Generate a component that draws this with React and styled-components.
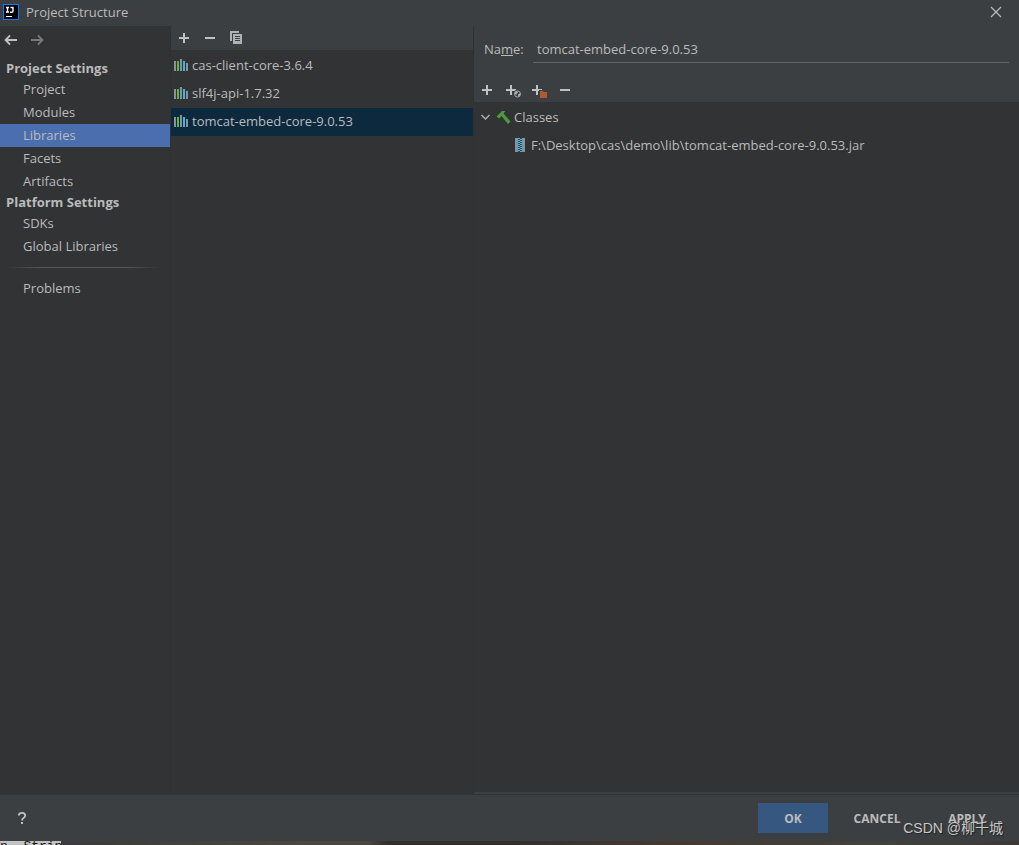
import React, { useState } from "react";
import styled, { createGlobalStyle } from "styled-components";

const GlobalStyle = createGlobalStyle`
  * {
    box-sizing: border-box;
  }

  body {
    margin: 0;
    background: #313335;
    color: #bbbbbb;
    font: 13px/18px "Open Sans", "Noto Sans CJK SC", sans-serif;
  }

  button, input {
    font: inherit;
    color: inherit;
  }
`;

const Window = styled.div`
  display: flex;
  flex-direction: column;
  height: 100vh;
  overflow: hidden;
`;

const TitleBar = styled.header`
  display: flex;
  align-items: center;
  gap: 7px;
  flex: none;
  height: 26px;
  padding: 0 15px 2px 3px;
  background: #3c3f41;
`;

const Title = styled.h1`
  flex: 1;
  margin: 0;
  font-size: 13px;
  font-weight: 400;
`;

const IconButton = styled.button`
  display: flex;
  align-items: center;
  justify-content: center;
  width: ${(props) => props.$width || 26}px;
  height: 24px;
  padding: 0;
  border: 0;
  background: none;
`;

const Body = styled.main`
  display: grid;
  grid-template-columns: 171px 303px 1fr;
  flex: 1;
  min-height: 0;
`;

const Sidebar = styled.nav`
  border-right: 1px solid #2f3133;
`;

const History = styled.div`
  display: flex;
  height: 33px;
  padding-top: 2px;
`;

const Heading = styled.h2`
  height: 19px;
  margin: 0;
  padding-left: 6px;
  font-size: 13px;
  font-weight: 700;
  line-height: 19px;
`;

const NavItem = styled.a`
  display: block;
  height: 23px;
  padding-left: 23px;
  line-height: 23px;
  color: inherit;
  text-decoration: none;
  background: ${(props) => (props.$active ? "#4b6eaf" : "transparent")};
`;

const Separator = styled.hr`
  height: 1px;
  margin: 9px 10px 9px 6px;
  border: 0;
  background: linear-gradient(to right, transparent, #555555 20%, #555555 80%, transparent);
`;

const ListPane = styled.section`
  border-right: 1px solid #2f3133;
`;

const Toolbar = styled.div`
  display: flex;
  height: 24px;
  background: #3c3f41;
`;

const List = styled.ul`
  margin: 0;
  padding: 2px 0;
  list-style: none;
`;

const ListItem = styled.li`
  display: flex;
  align-items: center;
  gap: 3px;
  height: 28px;
  padding: 0 2px 2px;
  background: ${(props) => (props.$active ? "#0d293e" : "transparent")};
`;

const Details = styled.section`
  display: flex;
  flex-direction: column;
  border-bottom: 1px solid #313335;
`;

const DetailsHeader = styled.div`
  padding-top: 11px;
  background: #3c3f41;
`;

const Field = styled.div`
  display: flex;
  align-items: center;
  gap: 10px;
  height: 26px;
  margin-bottom: 15px;
  padding: 0 10px;
`;

const Label = styled.label`
  width: 39px;
  padding-bottom: 2px;
`;

const Input = styled.input`
  flex: 1;
  min-width: 0;
  height: 26px;
  padding: 0 4px 2px;
  border: 0;
  border-bottom: 1px solid #646464;
  outline: none;
  background: transparent;
`;

const Tree = styled.ul`
  flex: 1;
  margin: 0;
  padding: 2px 0;
  border-bottom: 2px solid #3c3f41;
  list-style: none;
`;

const TreeRow = styled.li`
  display: flex;
  align-items: center;
  gap: ${(props) => (props.$level ? 3 : 2)}px;
  height: 28px;
  padding: 0 0 2px ${(props) => (props.$level ? 38 : 4)}px;
`;

const Footer = styled.footer`
  display: flex;
  align-items: center;
  gap: 8px;
  flex: none;
  height: 46px;
  padding: 0 11px 0 9px;
  background: #3c3f41;
`;

const Spacer = styled.div`
  flex: 1;
`;

const Button = styled.button`
  width: ${(props) => (props.$primary ? 70 : 82)}px;
  height: 30px;
  padding: 1px 0 0;
  border: 0;
  background: ${(props) => (props.$primary ? "#365880" : "transparent")};
  font-size: 12px;
  font-weight: 700;
`;

const Behind = styled.div`
  display: flex;
  flex: none;
  height: 4px;
  overflow: hidden;
  background: linear-gradient(to right, #3b3c3b 8%, #48483f 30%, #48483f 36%, #342f2f 38%, #322f2f 50%, #45392f 65%, #40423b 85%, #3c3a38);
`;

const BehindCode = styled.code`
  width: 61px;
  background: #c3c3c3;
  color: #161616;
  font: 13px/12px "Liberation Mono", monospace;
  white-space: pre;
`;

const Watermark = styled.div`
  position: absolute;
  right: 16px;
  bottom: 7px;
  color: #c8c8c8;
  font: 14px/20px "Liberation Sans", "Noto Sans CJK SC", sans-serif;
  text-shadow: 1px 1px 1px #222222;
  pointer-events: none;
`;

const Logo = () => (
  <svg width="16" height="16" viewBox="0 0 16 16" aria-hidden="true">
    <rect width="16" height="16" fill="#087cfa" />
    <rect x="1" y="1" width="14" height="14" fill="#000" />
    <path d="M3 3.500h3M4.500 3v5M3 8h3M7.500 3.500H10.500M10 3.500V7q0 1.300-1.300 1.300H7" fill="none" stroke="#fff" strokeWidth="1.400" />
    <path d="M3 12.500h6" stroke="#fff" strokeWidth="1" />
  </svg>
);

const CloseIcon = () => (
  <svg width="12" height="12" viewBox="0 0 12 12" aria-hidden="true">
    <path d="M1 1l10 10M11 1L1 11" stroke="#bbbbbb" strokeWidth="1.200" />
  </svg>
);

const ArrowIcon = ({ forward }) => (
  <svg width="16" height="16" viewBox="0 0 16 16" aria-hidden="true">
    <path
      d={forward ? "M2 8h11M9 3.500L13.500 8L9 12.500" : "M14 8H3M7 3.500L2.500 8L7 12.500"}
      fill="none"
      stroke={forward ? "#77797a" : "#bfc1c2"}
      strokeWidth="1.800"
    />
  </svg>
);

const AddIcon = ({ badge }) => (
  <svg width="18" height="18" viewBox="0 0 18 18" aria-hidden="true">
    <path d={badge ? "M7 4v10M2 9h10" : "M9 4v10M4 9h10"} stroke="#bfc1c2" strokeWidth="2" />
    {badge === "web" && (
      <g>
        <circle cx="13.500" cy="13" r="4.300" fill="#3c3f41" />
        <circle cx="13.500" cy="13" r="3" fill="none" stroke="#a4a7a8" />
        <path d="M11 11.500l2-1.500 1 1.500-1.500 1v1.500L11 13zM14 13.500l2-1v2L14.500 16z" fill="#b5b7b8" />
      </g>
    )}
    {badge === "folder" && (
      <g>
        <path d="M9 9h5v8H9z" fill="#3c3f41" />
        <path d="M10 10h3l1 1h3v6h-7z" fill="#b05a30" />
      </g>
    )}
  </svg>
);

const RemoveIcon = () => (
  <svg width="18" height="18" viewBox="0 0 18 18" aria-hidden="true">
    <path d="M4 9h10" stroke="#bfc1c2" strokeWidth="2" />
  </svg>
);

const CopyIcon = () => (
  <svg width="16" height="16" viewBox="0 0 16 16" aria-hidden="true">
    <path d="M2 1h9v2H4v8H2z" fill="#afb1b3" />
    <path d="M5 4h9v10H5z" fill="#afb1b3" />
    <path d="M7 6.500h5M7 8.500h5M7 10.500h5" stroke="#3c3f41" />
  </svg>
);

const LibraryIcon = () => (
  <svg width="16" height="16" viewBox="0 0 16 16" aria-hidden="true">
    <path d="M1 4h2v10H1zM7 2h2v12H7zM13 6h2v8h-2z" fill="#87939a" />
    <path d="M4 4h2v10H4z" fill="#62b543" />
    <path d="M10 4h2v10h-2z" fill="#40b6e0" />
  </svg>
);

const ChevronIcon = () => (
  <svg width="16" height="16" viewBox="0 0 16 16" aria-hidden="true">
    <path d="M3.500 6L7.500 10L11.500 6" fill="none" stroke="#adadad" strokeWidth="1.500" />
  </svg>
);

const HammerIcon = () => (
  <svg width="16" height="16" viewBox="0 0 16 16" aria-hidden="true">
    <path d="M0.500 7.500L6 2L9.500 2L7.500 4.500L14.500 12.500L12 15L5.500 7L3 9.500z" fill="#4f9a3e" />
  </svg>
);

const JarIcon = () => (
  <svg width="16" height="16" viewBox="0 0 16 16" aria-hidden="true">
    <path d="M3 1h10v14H3z" fill="#87939a" />
    <path d="M6 1h4v14H6z" fill="#2b4654" />
    <path d="M7 1v14" stroke="#40b6e0" strokeWidth="2" strokeDasharray="1 1" />
    <path d="M9 2v13" stroke="#40b6e0" strokeWidth="2" strokeDasharray="1 1" />
  </svg>
);

const HelpIcon = () => (
  <svg width="16" height="16" viewBox="0 0 16 16" aria-hidden="true">
    <path d="M4.800 5.500Q4.800 2.800 8 2.800Q11.200 2.800 11.200 5.500Q11.200 7 9.500 8Q8 9 8 10.500" fill="none" stroke="#bfc1c2" strokeWidth="1.800" />
    <path d="M7 12h2v2H7z" fill="#bfc1c2" />
  </svg>
);

const projectItems = ["Project", "Modules", "Libraries", "Facets", "Artifacts"];
const platformItems = ["SDKs", "Global Libraries"];
const libraries = ["cas-client-core-3.6.4", "slf4j-api-1.7.32", "tomcat-embed-core-9.0.53"];

export default function App() {
  const [page, setPage] = useState("Libraries");
  const [selected, setSelected] = useState(libraries[2]);
  const [name, setName] = useState(libraries[2]);

  const selectLibrary = (library) => {
    setSelected(library);
    setName(library);
  };

  const renderItem = (item) => (
    <NavItem key={item} href="#" $active={item === page} onClick={() => setPage(item)}>
      {item}
    </NavItem>
  );

  return (
    <Window>
      <GlobalStyle />
      <TitleBar>
        <Logo />
        <Title>Project Structure</Title>
        <IconButton $width={16} aria-label="Close"><CloseIcon /></IconButton>
      </TitleBar>
      <Body>
        <Sidebar>
          <History>
            <IconButton $width={22} aria-label="Back"><ArrowIcon /></IconButton>
            <IconButton $width={30} aria-label="Forward"><ArrowIcon forward /></IconButton>
          </History>
          <Heading>Project Settings</Heading>
          {projectItems.map(renderItem)}
          <Heading>Platform Settings</Heading>
          {platformItems.map(renderItem)}
          <Separator />
          {renderItem("Problems")}
        </Sidebar>
        <ListPane>
          <Toolbar>
            <IconButton aria-label="Add library"><AddIcon /></IconButton>
            <IconButton aria-label="Remove library"><RemoveIcon /></IconButton>
            <IconButton aria-label="Copy library"><CopyIcon /></IconButton>
          </Toolbar>
          <List>
            {libraries.map((library) => (
              <ListItem key={library} $active={library === selected} onClick={() => selectLibrary(library)}>
                <LibraryIcon />
                {library}
              </ListItem>
            ))}
          </List>
        </ListPane>
        <Details>
          <DetailsHeader>
            <Field>
              <Label htmlFor="name">Na<u>m</u>e:</Label>
              <Input id="name" value={name} onChange={(e) => setName(e.target.value)} />
            </Field>
            <Toolbar>
              <IconButton aria-label="Add"><AddIcon /></IconButton>
              <IconButton aria-label="Specify documentation URL"><AddIcon badge="web" /></IconButton>
              <IconButton aria-label="Exclude"><AddIcon badge="folder" /></IconButton>
              <IconButton aria-label="Remove"><RemoveIcon /></IconButton>
            </Toolbar>
          </DetailsHeader>
          <Tree>
            <TreeRow>
              <ChevronIcon />
              <HammerIcon />
              Classes
            </TreeRow>
            <TreeRow $level={1}>
              <JarIcon />
              F:\Desktop\cas\demo\lib\tomcat-embed-core-9.0.53.jar
            </TreeRow>
          </Tree>
        </Details>
      </Body>
      <Footer>
        <IconButton aria-label="Help"><HelpIcon /></IconButton>
        <Spacer />
        <Button $primary>OK</Button>
        <Button>CANCEL</Button>
        <Button>APPLY</Button>
      </Footer>
      <Behind>
        <BehindCode>n  Strin</BehindCode>
      </Behind>
      <Watermark>CSDN @柳千城</Watermark>
    </Window>
  );
}
